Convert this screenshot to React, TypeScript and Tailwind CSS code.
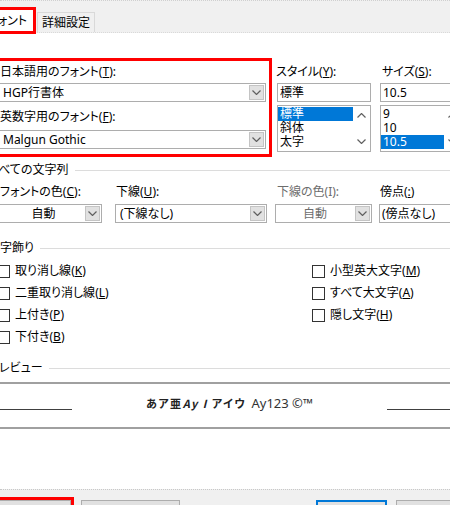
import React from "react";

const font = "font-['Noto_Sans','Noto_Sans_CJK_JP',sans-serif] [font-feature-settings:'palt']";

function Chevron({ up = false }: { up?: boolean }) {
  return (
    <svg width="9" height="5" viewBox="0 0 9 5" className={up ? "rotate-180" : ""}>
      <path d="M0.5 0.5 L4.5 4.5 L8.5 0.5" fill="none" stroke="#606060" strokeWidth="1.2" />
    </svg>
  );
}

function Combo({
  text,
  className = "",
  textClass = "pl-[5px]",
  disabled = false,
}: {
  text: string;
  className?: string;
  textClass?: string;
  disabled?: boolean;
}) {
  return (
    <div className={`flex h-[19px] border border-[#adadad] bg-white ${className}`}>
      <div
        className={`flex flex-1 items-center whitespace-nowrap text-[12px] leading-none ${textClass} ${
          disabled ? "text-[#6d6d6d]" : "text-black"
        }`}
      >
        {text}
      </div>
      <div className="m-px flex w-[15px] items-center justify-center border border-[#c4c4c4] bg-[#e1e1e1]">
        <Chevron />
      </div>
    </div>
  );
}

function Heading({ text, lineGap }: { text: string; lineGap: string }) {
  return (
    <div className="flex h-[16px] items-center">
      <span className="ml-[-12px] whitespace-nowrap text-[12px] leading-[16px] text-black">{text}</span>
      <div className={`h-px flex-1 bg-[#dcdcdc] ${lineGap}`} />
    </div>
  );
}

function ListBox({ items, selected, className = "" }: { items: string[]; selected: number; className?: string }) {
  return (
    <div className={`mt-[3px] flex h-[47px] border border-[#adadad] bg-white ${className}`}>
      <div className="flex flex-1 flex-col pt-px">
        {items.map((it, i) => (
          <div
            key={it}
            className={`flex h-[14px] items-center whitespace-nowrap pl-[2px] text-[12px] leading-[14px] ${
              i === selected ? "bg-[#0078d7] text-white" : "text-black"
            }`}
          >
            {it}
          </div>
        ))}
      </div>
      <div className="flex w-[17px] flex-col items-center justify-between py-[7px]">
        <Chevron up />
        <Chevron />
      </div>
    </div>
  );
}

function Check({ label, k }: { label: string; k: string }) {
  return (
    <div className="flex h-[22px] items-center">
      <div className="h-[13px] w-[13px] shrink-0 border border-[#333333] bg-white" />
      <span className="ml-[5px] whitespace-nowrap text-[12px] leading-[16px] text-black">
        {label}(<u>{k}</u>)
      </span>
    </div>
  );
}

export default function App() {
  return (
    <div className={`relative h-[505px] w-[450px] overflow-hidden bg-white ${font}`}>
      {/* tab strip */}
      <div className="flex h-[33px] items-end border-t border-dotted border-t-[#cfcfcf] border-b border-b-[#d9d9d9] bg-[#f0f0f0]">
        <div className="relative z-10 mb-[-2px] ml-[-20px] flex h-[27px] w-[56px] shrink-0 items-center justify-end border-[3px] border-[#ff0000] bg-white pr-[6px] text-[12px] text-black">
          フォント
        </div>
        <div className="ml-px flex h-[20px] w-[58px] shrink-0 items-center justify-center border border-b-0 border-[#d9d9d9] bg-[#f0f0f0] text-[12px] text-black">
          詳細設定
        </div>
      </div>

      {/* font row */}
      <div className="mt-[25px] flex items-start">
        <div className="ml-[-12px] w-[284px] shrink-0 border-[3px] border-[#ff0000] pb-[5px] pl-[9px] pr-[3px] pt-[3px]">
          <div className="h-[16px] text-[12px] leading-[16px] text-black">
            日本語用のフォント(<u>T</u>):
          </div>
          <Combo text="HGP行書体" className="ml-[-5px] mt-[3px]" textClass="pl-[7px]" />
          <div className="mt-[7px] h-[16px] text-[12px] leading-[16px] text-black">
            英数字用のフォント(<u>F</u>):
          </div>
          <Combo text="Malgun Gothic" className="ml-[-5px] mt-[5px]" textClass="pl-[7px]" />
        </div>

        <div className="ml-[4px] w-[95px] shrink-0 pt-[6px]">
          <div className="h-[16px] text-[12px] leading-[16px] text-black">
            スタイル(<u>Y</u>):
          </div>
          <div className="ml-px mt-[3px] flex h-[19px] items-center border border-[#adadad] bg-white pl-[2px] text-[12px] text-black">
            標準
          </div>
          <ListBox items={["標準", "斜体", "太字"]} selected={0} className="ml-px" />
        </div>

        <div className="ml-[9px] w-[82px] shrink-0 pt-[6px]">
          <div className="h-[16px] pl-[2px] text-[12px] leading-[16px] text-black">
            サイズ(<u>S</u>):
          </div>
          <div className="mt-[3px] flex h-[19px] items-center border border-[#adadad] bg-white pl-[2px] text-[12px] text-black">
            10.5
          </div>
          <ListBox items={["9", "10", "10.5"]} selected={2} />
        </div>
      </div>

      {/* all text */}
      <div className="mt-[5px]">
        <Heading text="すべての文字列" lineGap="ml-[7px]" />
      </div>
      <div className="mt-[6px] flex items-start">
        <div className="ml-[-12px] w-[114px] shrink-0">
          <div className="h-[16px] pl-[12px] text-[12px] leading-[16px] text-black">
            フォントの色(<u>C</u>):
          </div>
          <Combo text="自動" className="mt-[4px]" textClass="justify-center pl-[14px]" />
        </div>
        <div className="ml-[13px] w-[152px] shrink-0">
          <div className="h-[16px] pl-px text-[12px] leading-[16px] text-black">
            下線(<u>U</u>):
          </div>
          <Combo text="(下線なし)" className="mt-[4px]" textClass="pl-[4px]" />
        </div>
        <div className="ml-[8px] w-[97px] shrink-0">
          <div className="h-[16px] pl-[2px] text-[12px] leading-[16px] text-[#6d6d6d]">下線の色(I):</div>
          <Combo text="自動" className="mt-[4px]" textClass="justify-center" disabled />
        </div>
        <div className="ml-[7px] w-[90px] shrink-0">
          <div className="h-[16px] pl-px text-[12px] leading-[16px] text-black">
            傍点(<u>:</u>)
          </div>
          <Combo text="(傍点なし)" className="mt-[4px]" textClass="pl-[2px]" />
        </div>
      </div>

      {/* effects */}
      <div className="mt-[17px]">
        <Heading text="文字飾り" lineGap="ml-[6px]" />
      </div>
      <div className="mt-[4px] flex">
        <div className="ml-[-3px] flex w-[315px] shrink-0 flex-col">
          <Check label="取り消し線" k="K" />
          <Check label="二重取り消し線" k="L" />
          <Check label="上付き" k="P" />
          <Check label="下付き" k="B" />
        </div>
        <div className="flex flex-col">
          <Check label="小型英大文字" k="M" />
          <Check label="すべて大文字" k="A" />
          <Check label="隠し文字" k="H" />
        </div>
      </div>

      {/* preview */}
      <div className="mt-[12px]">
        <Heading text="プレビュー" lineGap="ml-[6px]" />
      </div>
      <div className="mt-[6px] flex h-[47px] items-start border-y-2 border-[#a0a0a0] bg-white">
        <div className="mt-[25px] h-px w-[72px] shrink-0 bg-[#404040]" />
        <div className="flex flex-1 items-end justify-center pt-[11px] text-[#222222]">
          <span className="whitespace-nowrap font-['Noto_Sans_CJK_JP',serif] text-[11px] font-bold leading-[16px] tracking-[1.5px]">
            あア亜<i>Ay</i> <i>I</i> アイウ
          </span>
          <span className="ml-[5px] whitespace-nowrap font-['Noto_Sans',sans-serif] text-[13px] leading-[16px] text-[#333333]">
            Ay123 ©™
          </span>
        </div>
        <div className="mt-[25px] h-px w-[63px] shrink-0 bg-[#404040]" />
      </div>

      {/* footer */}
      <div className="mt-[60px] flex h-[16px] items-start border-t border-dotted border-[#c8c8c8] bg-[#f0f0f0] pt-[7px]">
        <div className="ml-[-10px] h-[20px] w-[84px] shrink-0 border-[3px] border-[#ff0000]">
          <div className="h-full w-full border border-[#adadad] bg-[#e1e1e1]" />
        </div>
        <div className="ml-[7px] mt-[3px] h-[20px] w-[99px] shrink-0 border border-[#adadad] bg-[#e1e1e1]" />
        <div className="ml-[136px] mt-[3px] h-[20px] w-[71px] shrink-0 border-2 border-[#0078d7] bg-[#e1e1e1]" />
        <div className="ml-[9px] mt-[3px] h-[20px] w-[80px] shrink-0 border border-[#adadad] bg-[#e1e1e1]" />
      </div>
    </div>
  );
}
